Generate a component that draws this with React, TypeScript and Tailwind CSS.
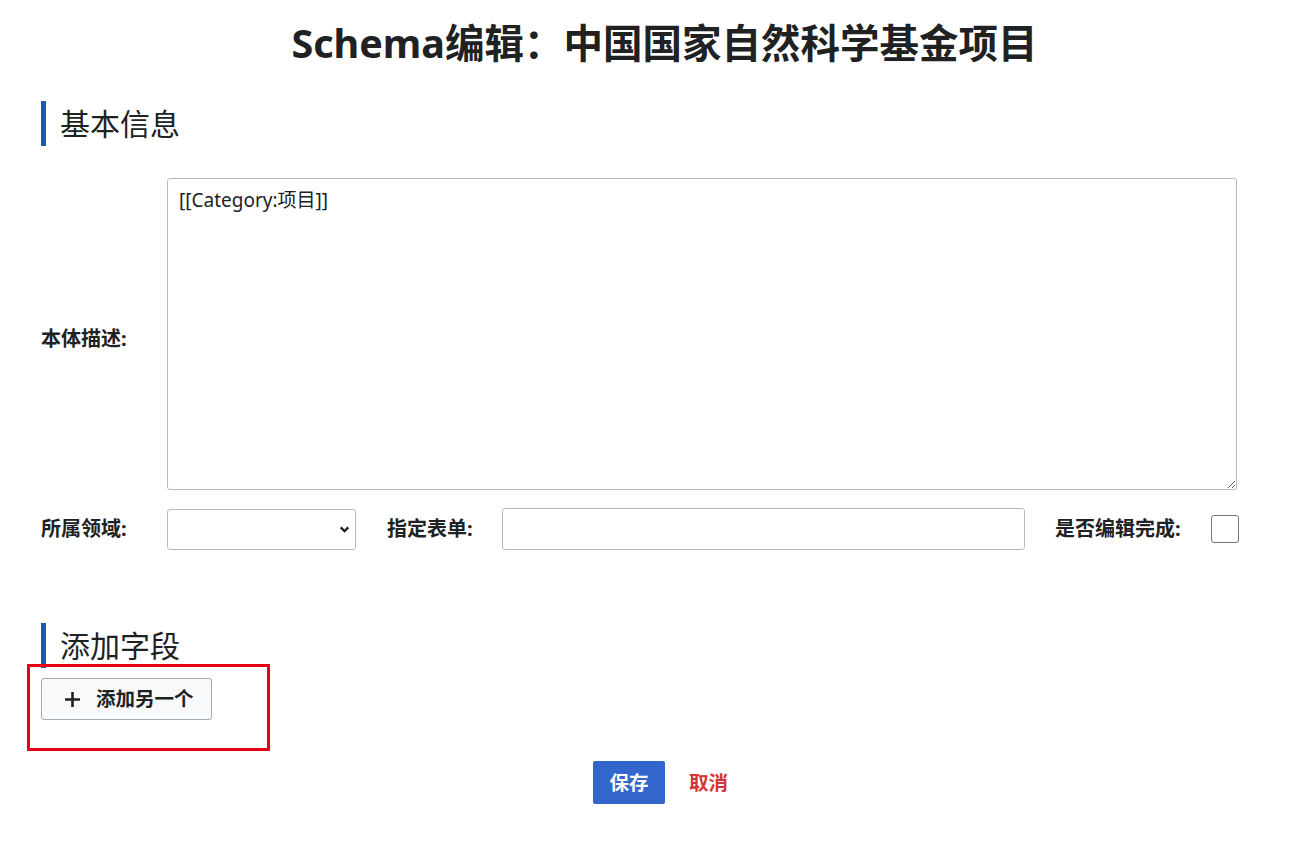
import { useState } from "react";

const font = "font-['Noto_Sans','Noto_Sans_CJK_SC',sans-serif]";

function SectionTitle({ children }: { children: React.ReactNode }) {
  return (
    <div className="h-[45px] border-l-[5px] border-[#1b5aa6] pl-[14px] text-[30px] leading-[45px] text-[#202122]">
      {children}
    </div>
  );
}

export default function App() {
  const [desc, setDesc] = useState("[[Category:项目]]");
  const [done, setDone] = useState(false);

  return (
    <div className={`${font} min-h-[861px] bg-white text-[#202122]`}>
      <h1 className="pl-[36px] pt-[15px] text-center text-[39.5px] font-bold leading-[56px]">
        Schema编辑：中国国家自然科学基金项目
      </h1>

      <div className="ml-[41px] w-[1198px]">
        {/* 基本信息 */}
        <div className="mt-[30px]">
          <SectionTitle>基本信息</SectionTitle>
        </div>

        <div className="mt-[32px] flex items-center">
          <label className="w-[126px] pt-[10px] text-[20px] font-bold">本体描述:</label>
          <textarea
            value={desc}
            onChange={(e) => setDesc(e.target.value)}
            className="mr-[2px] h-[312px] flex-1 resize-y rounded-[3px] border border-[#bbbbbb] px-[11px] py-[7px] text-[19px] leading-[28px] outline-none"
          />
        </div>

        <div className="mt-[18px] flex items-center">
          <label className="w-[126px] text-[20px] font-bold">所属领域:</label>
          <div className="relative w-[189px]">
            <select className="h-[41px] w-full appearance-none rounded-[3px] border border-[#bbbbbb] bg-white px-2 text-[19px] outline-none">
              <option value=""></option>
            </select>
            <svg
              className="pointer-events-none absolute right-[5px] top-[14px]"
              width="13"
              height="13"
              viewBox="0 0 12 12"
              fill="none"
              stroke="#202122"
              strokeWidth="2.2"
            >
              <path d="M2.5 4l3.5 3.5L9.5 4" />
            </svg>
          </div>
          <label className="ml-[31px] w-[115px] text-[20px] font-bold">指定表单:</label>
          <input
            type="text"
            className="h-[42px] w-[523px] rounded-[3px] border border-[#bbbbbb] px-2 text-[19px] outline-none"
          />
          <label className="ml-[30px] flex-1 text-[20px] font-bold">是否编辑完成:</label>
          <input
            type="checkbox"
            checked={done}
            onChange={() => setDone(!done)}
            className="h-[28px] w-[28px] appearance-none rounded-[3px] border border-[#72777d] bg-white checked:bg-[#36c]"
          />
        </div>

        {/* 添加字段 */}
        <div className="mt-[73px]">
          <SectionTitle>添加字段</SectionTitle>
        </div>

        <div className="relative mt-[10px]">
          <button className="flex h-[42px] w-[171px] items-center rounded-[3px] border border-[#a2a9b1] bg-[#f8f9fa] pl-[22px] text-[19.5px] font-bold text-[#202122]">
            <svg width="17" height="17" viewBox="0 0 17 17" stroke="#202122" strokeWidth="2.6">
              <path d="M8.5 1v15M1 8.5h15" />
            </svg>
            <span className="ml-[15px]">添加另一个</span>
          </button>
          <div className="pointer-events-none absolute left-[-14px] top-[-14px] h-[87px] w-[243px] border-[3px] border-[#e60012]" />
        </div>
      </div>

      <div className="mt-[41px] flex items-center justify-center gap-[24px] pl-[28px]">
        <button className="h-[43px] w-[72px] rounded-[2px] bg-[#3366cc] text-[19.5px] font-bold text-white">
          保存
        </button>
        <button className="text-[19.5px] font-bold text-[#d73333]">取消</button>
      </div>
    </div>
  );
}
